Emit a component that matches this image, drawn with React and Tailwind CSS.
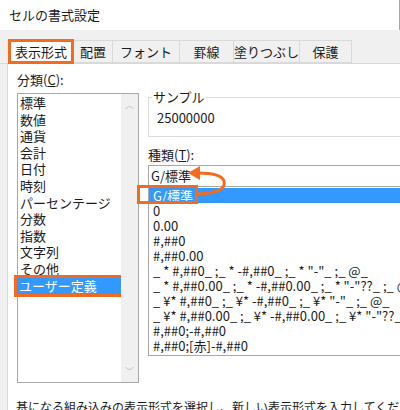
const cats = ["標準","数値","通貨","会計","日付","時刻","パーセンテージ","分数","指数","文字列","その他","ユーザー定義"];
const types = ["0","0.00","#,##0","#,##0.00",
  '_ * #,##0_ ;_ * -#,##0_ ;_ * "-"_ ;_ @_ ',
  '_ * #,##0.00_ ;_ * -#,##0.00_ ;_ * "-"??_ ;_ @_ ',
  '_ ¥* #,##0_ ;_ ¥* -#,##0_ ;_ ¥* "-"_ ;_ @_ ',
  '_ ¥* #,##0.00_ ;_ ¥* -#,##0.00_ ;_ ¥* "-"??_ ;_ @_ ',
  "#,##0;-#,##0","#,##0;[赤]-#,##0"];
const tabs = ["配置","フォント","罫線","塗りつぶし","保護"];
const tabW = ["w-[39px]","w-[67px]","w-[54px]","w-[66px]","w-[52px]"];
const font = { fontFamily: '"Noto Sans CJK JP", "Noto Sans", sans-serif' };

export default function App() {
  return (
    <div className="w-[400px] h-[410px] overflow-hidden bg-[#f0f0f0] text-[13px] text-[#1a1a1a] relative" style={font}>
      <div className="h-[30px] bg-white flex items-center pl-[9px] border-r border-[#aaa]">セルの書式設定</div>
      <div className="flex items-end h-[34px] pl-[8px] border-b border-[#d9d9d9]">
        <div className="h-[25px] w-[66px] bg-white border-[3px] border-[#f26b21] flex items-center justify-center whitespace-nowrap -mb-px relative z-10">表示形式</div>
        {tabs.map((t, i) => (
          <div key={t} className={`h-[23px] border border-[#d9d9d9] border-l-0 flex items-center justify-center whitespace-nowrap ${tabW[i]}`}>{t}</div>
        ))}
      </div>
      <div className="ml-[7px] bg-white border-l border-[#d9d9d9] h-[346px] flex pt-[6px]">
        <div className="w-[131px] pl-[9px] shrink-0">
          <div className="h-[23px]">分類(<u>C</u>):</div>
          <div className="w-[122px] h-[290px] border border-[#a8a8a8] flex">
            <div className="flex-1 pt-[1px]">
              {cats.map((c) => (
                <div key={c} className={`h-[16.6px] leading-[16.6px] pl-[2px] whitespace-nowrap ${c === "ユーザー定義" ? "bg-[#3399ff] text-white outline-[3px] outline-[#f26b21] -ml-px mr-[-4px]" : ""}`}>{c}</div>
              ))}
            </div>
            <div className="w-[17px] bg-[#f0f0f0] flex flex-col justify-between items-center text-[9px] text-[#bbb] py-[4px]">
              <span>︿</span><span>﹀</span>
            </div>
          </div>
        </div>
        <div className="flex-1 pl-[9px] relative">
          <div className="relative border border-[#dcdcdc] border-r-0 h-[40px] mt-[27px]">
            <span className="absolute -top-[11px] left-[3px] bg-white px-[1px]">サンプル</span>
            <div className="pl-[8px] pt-[10px]">25000000</div>
          </div>
          <div className="mt-[8px] h-[18px]">種類(<u>T</u>):</div>
          <div className="h-[22px] border border-[#a8a8a8] border-r-0 flex items-center pl-[2px] mt-[2px]">G/標準</div>
          <div className="h-[169px] border border-[#a8a8a8] border-r-0 border-t-0 whitespace-nowrap overflow-hidden">
            <div className="h-[15px] leading-[15px] mt-px bg-[#3399ff] text-white pl-[4px]">G/標準</div>
            {types.map((t) => (
              <div key={t} className="h-[15px] leading-[15px] pl-[4px] whitespace-pre overflow-hidden">{t}</div>
            ))}
          </div>
          <div className="absolute left-[-2px] top-[115px] w-[61px] h-[19px] border-[3px] border-[#f26b21]"></div>
          <svg className="absolute left-[49px] top-[90px]" width="45" height="40" viewBox="0 0 45 40" fill="none">
            <path d="M10 34 C 30 33, 38 29, 36 21 C 34 15, 24 13, 10 13" stroke="#f26b21" strokeWidth="3" strokeLinecap="round" />
            <path d="M0 13 L12 6 L12 20 Z" fill="#f26b21" />
          </svg>
        </div>
      </div>
      <div className="absolute left-[16px] top-[398px] whitespace-nowrap text-[12px]">基になる組み込みの表示形式を選択し、新しい表示形式を入力してください。</div>
    </div>
  );
}
